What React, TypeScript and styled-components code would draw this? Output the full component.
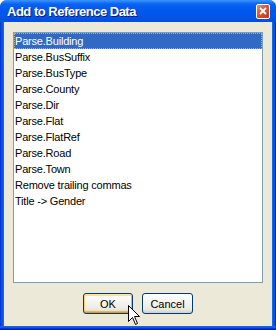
import React from "react"
import styled, {createGlobalStyle} from "styled-components";

const GlobalStyle = createGlobalStyle`
  body {
    margin: 0;
    background: #ffffff;
  }
`

const StyledWindow = styled.div`
  position: relative;
  width: 276px;
  height: 330px;
  box-sizing: border-box;
  display: flex;
  flex-direction: column;
  background: linear-gradient(90deg, #0019cf 0, #0855dd 1px, #0855dd 3px, #166aee 3px, #166aee calc(100% - 3px), #0855dd calc(100% - 3px), #0855dd calc(100% - 1px), #0019cf calc(100% - 1px));
  border-radius: 7px 7px 0 0;
  overflow: hidden;
  font-family: "Liberation Sans", Arial, sans-serif;
`

const StyledTitleBar = styled.div`
  height: 22px;
  flex: none;
  display: flex;
  align-items: center;
  justify-content: space-between;
  padding: 0 6px 0 7px;
  background: linear-gradient(180deg, #3d95ff 0%, #0a64f0 18%, #0058ee 45%, #0055e5 80%, #0a4cd8 100%);
`

const StyledTitle = styled.div`
  color: #ffffff;
  font-weight: bold;
  font-size: 13px;
  letter-spacing: -0.5px;
  text-shadow: 1px 1px 0 #0a1883;
  padding-top: 1px;
`

const StyledCloseButton = styled.div`
  width: 14px;
  height: 15px;
  box-sizing: border-box;
  border: 1px solid #ffffff;
  border-radius: 2px;
  background: linear-gradient(135deg, #e8907a 0%, #d65a3c 40%, #c2381c 100%);
  display: flex;
  align-items: center;
  justify-content: center;
`

const StyledClient = styled.div`
  flex: 1;
  margin: 0 4px 0 4px;
  background: #ece9d8;
  display: flex;
  flex-direction: column;
  padding: 10px 9px 0 9px;
`

const StyledBottomFrame = styled.div`
  height: 4px;
  flex: none;
  background: linear-gradient(180deg, #166aee 0, #0855dd 2px, #0019cf 3px);
`

const StyledListBox = styled.div`
  height: 251px;
  box-sizing: border-box;
  border: 1px solid #7f9db9;
  background: #ffffff;
`

const StyledItem = styled.div<{
    selected: boolean,
}>`
  height: 16px;
  line-height: 16px;
  padding-left: 1px;
  font-size: 11px;
  letter-spacing: -0.2px;
  color: ${props => props.selected ? "#ffffff" : "#000000"};
  background: ${props => props.selected ? "#316ac5" : "transparent"};
  outline: ${props => props.selected ? "1px dotted #e8a848" : "none"};
  outline-offset: -1px;
  white-space: nowrap;
`

const StyledButtonRow = styled.div`
  display: flex;
  justify-content: center;
  gap: 9px;
  margin-top: 10px;
`

const StyledButton = styled.div<{
    isDefault: boolean,
    width: number,
}>`
  width: ${props => props.width}px;
  height: 21px;
  box-sizing: border-box;
  border: 1px solid #003c74;
  border-radius: 3px;
  background: linear-gradient(180deg, #ffffff 0%, #f3f2ee 50%, #ebe9e1 80%, #d6d0c5 100%);
  box-shadow: ${props => props.isDefault
          ? "inset 0 1px 0 #ffe7a2, inset 0 -1px 0 #e5971f, inset 1px 0 0 #fbd279, inset -1px 0 0 #f5b44a, inset 0 2px 0 #fddc94, inset 0 -2px 0 #f7b440"
          : "inset 0 -1px 0 #d6d0c5"};
  display: flex;
  align-items: center;
  justify-content: center;
  font-size: 11px;
  color: #000000;
`

const StyledCursor = styled.svg`
  position: absolute;
  left: 128px;
  top: 305px;
`

const items = [
    "Parse.Building",
    "Parse.BusSuffix",
    "Parse.BusType",
    "Parse.County",
    "Parse.Dir",
    "Parse.Flat",
    "Parse.FlatRef",
    "Parse.Road",
    "Parse.Town",
    "Remove trailing commas",
    "Title -> Gender",
]

export default function App() {
    return (
        <>
            <GlobalStyle/>
            <StyledWindow>
                <StyledTitleBar>
                    <StyledTitle>Add to Reference Data</StyledTitle>
                    <StyledCloseButton>
                        <svg width="8" height="8" viewBox="0 0 8 8">
                            <path d="M1 1 L7 7 M7 1 L1 7" stroke="#ffffff" strokeWidth="1.8"/>
                        </svg>
                    </StyledCloseButton>
                </StyledTitleBar>
                <StyledClient>
                    <StyledListBox>
                        {items.map((item, i) => (
                            <StyledItem key={item} selected={i === 0}>{item}</StyledItem>
                        ))}
                    </StyledListBox>
                    <StyledButtonRow>
                        <StyledButton isDefault={true} width={50}>OK</StyledButton>
                        <StyledButton isDefault={false} width={51}>Cancel</StyledButton>
                    </StyledButtonRow>
                </StyledClient>
                <StyledBottomFrame/>
                <StyledCursor width="14" height="22" viewBox="0 0 14 22">
                    <path d="M0.5 0.5 L0.5 16.5 L4.5 12.5 L7.5 19.5 L9.5 18.5 L6.5 11.5 L11.5 11.5 Z"
                          fill="#ffffff" stroke="#000000" strokeWidth="1"/>
                </StyledCursor>
            </StyledWindow>
        </>
    )
}
